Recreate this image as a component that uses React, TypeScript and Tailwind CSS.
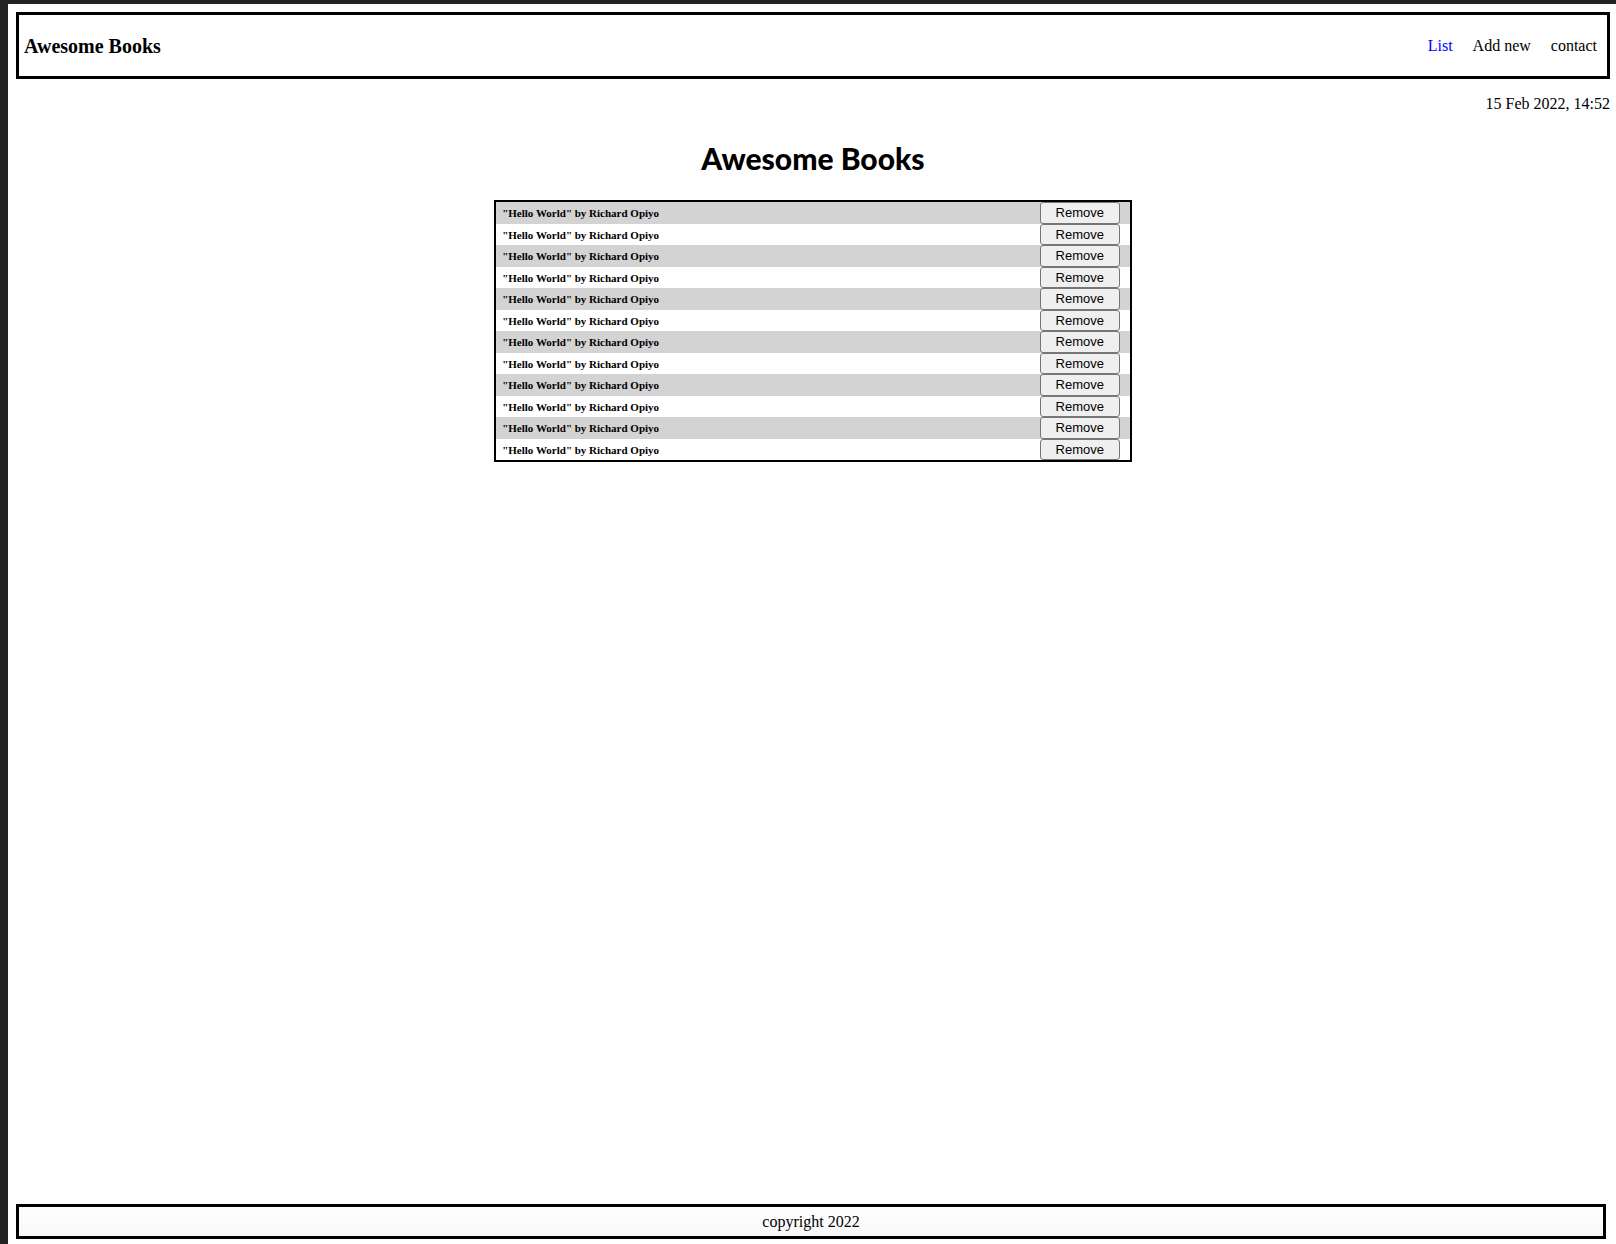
const books = Array.from({ length: 12 }, (_, id) => ({
  id,
  title: 'Hello World',
  author: 'Richard Opiyo',
}));

export default function App() {
  return (
    <div className="flex min-h-screen flex-col border-t-4 border-l-8 border-[#232325] bg-white pt-2 pr-1.5 pb-[5px] pl-2 font-['Liberation_Serif',serif] text-base text-black">
      <header className="flex items-center justify-between border-3 border-black pt-5 pr-2.5 pb-[19px] pl-[5px]">
        <h3 className="text-xl leading-[22px] font-bold">Awesome Books</h3>
        <nav className="flex gap-5 leading-[22px]">
          <a href="#list" className="text-[#0000ff]">List</a>
          <a href="#add">Add new</a>
          <a href="#contact">contact</a>
        </nav>
      </header>
      <main className="flex flex-1 flex-col">
        <time dateTime="2022-02-15T14:52" className="mt-4 text-right leading-[18px]">
          15 Feb 2022, 14:52
        </time>
        <h1 className="mt-[23px] text-center font-['Lato',sans-serif] text-[30px] leading-[44px] font-black">
          Awesome Books
        </h1>
        <ul className="mt-5 w-[40%] self-center border-2 border-black">
          {books.map((book) => (
            <li
              key={book.id}
              className="flex items-stretch justify-between pr-2.5 pl-1.5 odd:h-[22px] odd:bg-[#d3d3d3] even:h-[21px]"
            >
              <h6 className="self-center text-[11px] leading-3 font-bold">
                "{book.title}" by {book.author}
              </h6>
              <button
                type="button"
                className="w-20 rounded-[3px] border border-[#767676] bg-[#efefef] text-center font-['Liberation_Sans',sans-serif] text-[13px] leading-4"
              >
                Remove
              </button>
            </li>
          ))}
        </ul>
      </main>
      <footer className="mr-1 border-3 border-black bg-linear-to-b from-white to-[#f8f8f8] pt-1.5 pb-[5px] text-center leading-[18px]">
        copyright 2022
      </footer>
    </div>
  );
}
